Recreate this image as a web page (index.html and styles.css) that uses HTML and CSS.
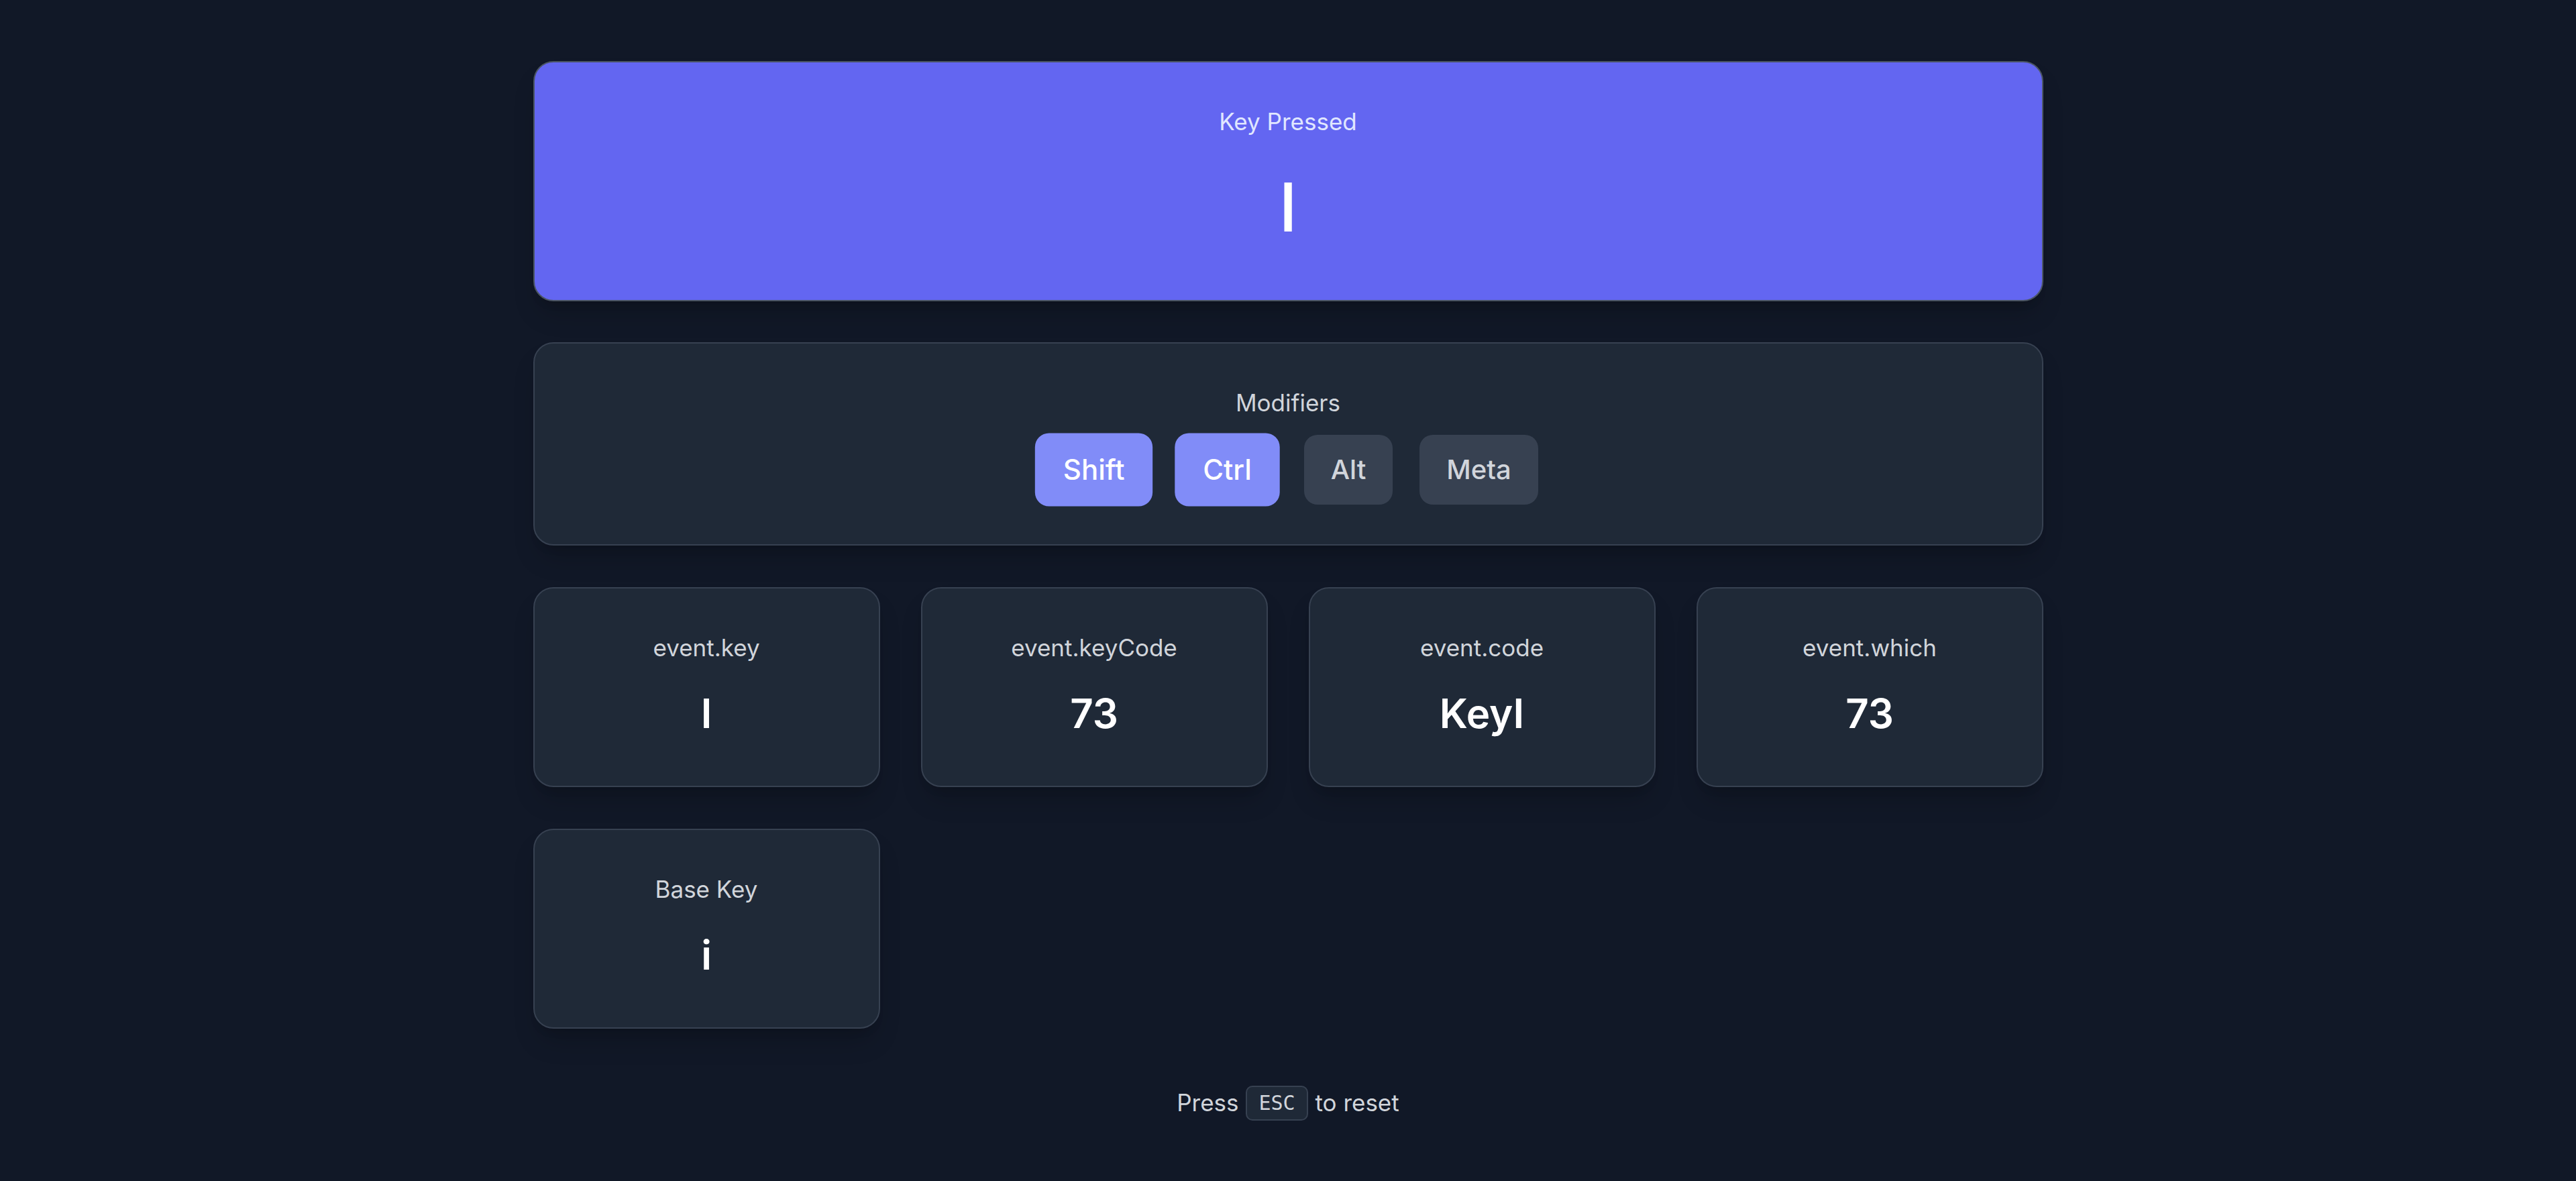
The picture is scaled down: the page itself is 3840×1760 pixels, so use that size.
FILE: index.html
```html
<!DOCTYPE html>
<html lang="en">
<head>
<meta charset="utf-8">
<title>Key Event Viewer</title>
<link rel="stylesheet" href="styles.css">
</head>
<body>
<main class="page">
  <section class="hero">
    <div class="hero-label">Key Pressed</div>
    <div class="hero-value">I</div>
  </section>

  <section class="panel modifiers">
    <div class="label">Modifiers</div>
    <div class="mod-list">
      <span class="mod active">Shift</span>
      <span class="mod active">Ctrl</span>
      <span class="mod">Alt</span>
      <span class="mod">Meta</span>
    </div>
  </section>

  <section class="grid">
    <div class="panel card">
      <div class="label">event.key</div>
      <div class="value">I</div>
    </div>
    <div class="panel card">
      <div class="label">event.keyCode</div>
      <div class="value">73</div>
    </div>
    <div class="panel card">
      <div class="label">event.code</div>
      <div class="value">KeyI</div>
    </div>
    <div class="panel card">
      <div class="label">event.which</div>
      <div class="value">73</div>
    </div>
    <div class="panel card">
      <div class="label">Base Key</div>
      <div class="value">i</div>
    </div>
  </section>

  <p class="footer">Press <kbd class="kbd">ESC</kbd> to reset</p>
</main>
</body>
</html>
```

FILE: styles.css
```css
* {
  box-sizing: border-box;
}

html, body {
  margin: 0;
  padding: 0;
  background: #111827;
  color: #f9fafb;
  font-family: Inter, "Noto Sans", "DejaVu Sans", sans-serif;
}

.page {
  width: 2251px;
  margin: 0 auto;
  padding-top: 91px;
  display: flex;
  flex-direction: column;
}

.hero {
  background: #6366f1;
  border: 2px solid #4b5563;
  border-radius: 30px;
  padding: 63px 40px;
  text-align: center;
  box-shadow: 0 25px 38px -8px rgba(0, 0, 0, 0.18), 0 10px 15px -10px rgba(0, 0, 0, 0.18);
  margin-bottom: 61px;
}

.hero-label {
  font-size: 35px;
  line-height: 50px;
  color: #e0e7ff;
  font-weight: 400;
}

.hero-value {
  margin-top: 28px;
  font-size: 100px;
  line-height: 150px;
  font-weight: 500;
  color: #ffffff;
}

.panel {
  background: #1f2937;
  border: 2px solid #374151;
  border-radius: 30px;
  text-align: center;
  box-shadow: 0 25px 38px -8px rgba(0, 0, 0, 0.18), 0 10px 15px -10px rgba(0, 0, 0, 0.18);
}

.modifiers {
  padding: 63px 40px 59px;
  margin-bottom: 62px;
}

.label {
  font-size: 35px;
  line-height: 50px;
  color: #d1d5db;
}

.mod-list {
  margin-top: 23px;
  display: flex;
  justify-content: center;
  gap: 40px;
}

.mod {
  display: inline-block;
  padding: 22px 40px;
  font-size: 40px;
  line-height: 60px;
  font-weight: 500;
  border-radius: 20px;
  background: #374151;
  color: #d1d5db;
}

.mod.active {
  background: #818cf8;
  color: #ffffff;
  transform: scale(1.05);
}

.grid {
  display: grid;
  grid-template-columns: repeat(4, 1fr);
  column-gap: 61px;
  row-gap: 62px;
}

.card {
  padding: 63px 30px;
}

.value {
  margin-top: 28px;
  font-size: 60px;
  line-height: 90px;
  font-weight: 600;
  color: #ffffff;
}

.footer {
  margin: 85px 0 0;
  text-align: center;
  font-size: 35px;
  line-height: 50px;
  color: #d1d5db;
}

.kbd {
  display: inline-block;
  font-family: "DejaVu Sans Mono", "Liberation Mono", monospace;
  font-size: 30px;
  line-height: 30px;
  padding: 9px 17px;
  margin: 0 1px;
  background: #1f2937;
  border: 2px solid #374151;
  border-radius: 10px;
  color: #d1d5db;
  vertical-align: 2px;
}
```
